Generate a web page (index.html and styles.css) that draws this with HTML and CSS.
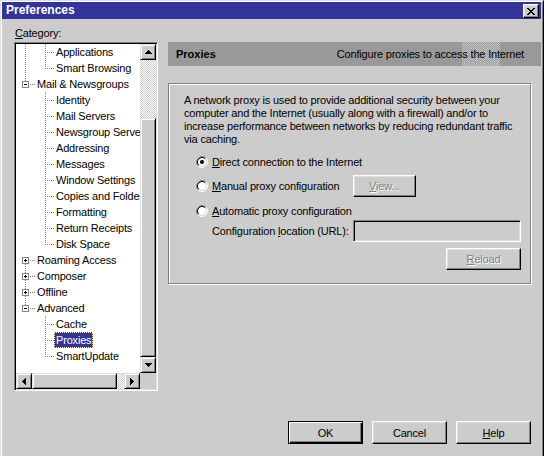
FILE: index.html
```html
<!DOCTYPE html>
<html>
<head>
<meta charset="utf-8">
<title>Preferences</title>
<link rel="stylesheet" href="styles.css">
</head>
<body>
<div class="window">
  <div class="frame">
    <div class="titlebar">
      <span class="title">Preferences</span>
      <button class="close" type="button"><svg width="8" height="7" viewBox="0 0 8 7" shape-rendering="crispEdges"><path d="M0 0h2v1h-2zM6 0h2v1h-2zM1 1h2v1h-2zM5 1h2v1h-2zM2 2h4v1h-4zM3 3h2v1h-2zM2 4h4v1h-4zM1 5h2v1h-2zM5 5h2v1h-2zM0 6h2v1h-2zM6 6h2v1h-2z" fill="#000"/></svg></button>
    </div>
    <div class="main">
      <div class="left">
        <div class="label"><u>C</u>ategory:</div>
        <div class="treebox">
          <div class="list">
            <div class="row lv2 r-a">Applications</div>
            <div class="row lv2 r-sb">Smart Browsing</div>
            <div class="row lv1 r-top"><svg class="exp" width="7" height="7" viewBox="0 0 7 7" shape-rendering="crispEdges"><rect x="0.5" y="0.5" width="6" height="6" fill="#fff" stroke="#808080"/><rect x="2" y="3" width="3" height="1" fill="#000"/></svg><span class="t1">Mail &amp; Newsgroups</span></div>
            <div class="row lv2 r-c">Identity</div>
            <div class="row lv2 r-c">Mail Servers</div>
            <div class="row lv2 r-c">Newsgroup Servers</div>
            <div class="row lv2 r-c">Addressing</div>
            <div class="row lv2 r-c">Messages</div>
            <div class="row lv2 r-c">Window Settings</div>
            <div class="row lv2 r-c">Copies and Folders</div>
            <div class="row lv2 r-c">Formatting</div>
            <div class="row lv2 r-c">Return Receipts</div>
            <div class="row lv2 r-cl">Disk Space</div>
            <div class="row lv1 r-bot"><svg class="exp" width="7" height="7" viewBox="0 0 7 7" shape-rendering="crispEdges"><rect x="0.5" y="0.5" width="6" height="6" fill="#fff" stroke="#808080"/><rect x="2" y="3" width="3" height="1" fill="#000"/><rect x="3" y="2" width="1" height="3" fill="#000"/></svg><span class="t1">Roaming Access</span></div>
            <div class="row lv1 r-mid"><svg class="exp" width="7" height="7" viewBox="0 0 7 7" shape-rendering="crispEdges"><rect x="0.5" y="0.5" width="6" height="6" fill="#fff" stroke="#808080"/><rect x="2" y="3" width="3" height="1" fill="#000"/><rect x="3" y="2" width="1" height="3" fill="#000"/></svg><span class="t1">Composer</span></div>
            <div class="row lv1 r-mid"><svg class="exp" width="7" height="7" viewBox="0 0 7 7" shape-rendering="crispEdges"><rect x="0.5" y="0.5" width="6" height="6" fill="#fff" stroke="#808080"/><rect x="2" y="3" width="3" height="1" fill="#000"/><rect x="3" y="2" width="1" height="3" fill="#000"/></svg><span class="t1">Offline</span></div>
            <div class="row lv1 r-top"><svg class="exp" width="7" height="7" viewBox="0 0 7 7" shape-rendering="crispEdges"><rect x="0.5" y="0.5" width="6" height="6" fill="#fff" stroke="#808080"/><rect x="2" y="3" width="3" height="1" fill="#000"/></svg><span class="t1">Advanced</span></div>
            <div class="row lv2 r-c">Cache</div>
            <div class="row lv2 r-c"><span class="sel">Proxies</span></div>
            <div class="row lv2 r-cl">SmartUpdate</div>
          </div>
          <div class="vscroll">
            <div class="sbtn"><svg width="7" height="4" viewBox="0 0 7 4" shape-rendering="crispEdges"><path d="M3 0h1v1h-1zM2 1h3v1h-3zM1 2h5v1h-5zM0 3h7v1h-7z" fill="#000"/></svg></div>
            <div class="track vtrack"></div>
            <div class="thumb vthumb"></div>
            <div class="sbtn"><svg width="7" height="4" viewBox="0 0 7 4" shape-rendering="crispEdges"><path d="M0 0h7v1h-7zM1 1h5v1h-5zM2 2h3v1h-3zM3 3h1v1h-1z" fill="#000"/></svg></div>
          </div>
          <div class="hscroll">
            <div class="sbtn"><svg width="4" height="7" viewBox="0 0 4 7" shape-rendering="crispEdges"><path d="M3 0h1v7h-1zM2 1h1v5h-1zM1 2h1v3h-1zM0 3h1v1h-1z" fill="#000"/></svg></div>
            <div class="thumb hthumb"></div>
            <div class="track htrack"></div>
            <div class="sbtn"><svg width="4" height="7" viewBox="0 0 4 7" shape-rendering="crispEdges"><path d="M0 0h1v7h-1zM1 1h1v5h-1zM2 2h1v3h-1zM3 3h1v1h-1z" fill="#000"/></svg></div>
          </div>
          <div class="corner"></div>
        </div>
      </div>
      <div class="right">
        <div class="header">
          <span class="htitle">Proxies</span>
          <span class="hdesc">Configure proxies to access the Internet</span>
        </div>
        <div class="group">
          <p class="desc">A network proxy is used to provide additional security between your<br>computer and the Internet (usually along with a firewall) and/or to<br>increase performance between networks by reducing redundant traffic<br>via caching.</p>
          <div class="opts">
            <div class="opt o1">
              <svg class="radio" width="12" height="12" viewBox="0 0 12 12"><circle cx="6" cy="6" r="4" fill="#fff"/><path d="M2.11 9.89A5.5 5.5 0 0 1 9.89 2.11" fill="none" stroke="#808080"/><path d="M9.89 2.11A5.5 5.5 0 0 1 2.11 9.89" fill="none" stroke="#fff"/><path d="M2.82 9.18A4.5 4.5 0 0 1 9.18 2.82" fill="none" stroke="#000"/><path d="M9.18 2.82A4.5 4.5 0 0 1 2.82 9.18" fill="none" stroke="#dfdfdf"/><circle cx="6" cy="6" r="2" fill="#000"/></svg>
              <span><u>D</u>irect connection to the Internet</span>
            </div>
            <div class="opt o2">
              <div class="lab">
                <svg class="radio" width="12" height="12" viewBox="0 0 12 12"><circle cx="6" cy="6" r="4" fill="#fff"/><path d="M2.11 9.89A5.5 5.5 0 0 1 9.89 2.11" fill="none" stroke="#808080"/><path d="M9.89 2.11A5.5 5.5 0 0 1 2.11 9.89" fill="none" stroke="#fff"/><path d="M2.82 9.18A4.5 4.5 0 0 1 9.18 2.82" fill="none" stroke="#000"/><path d="M9.18 2.82A4.5 4.5 0 0 1 2.82 9.18" fill="none" stroke="#dfdfdf"/></svg>
                <span><u>M</u>anual proxy configuration</span>
              </div>
              <button class="btn view dis" type="button"><u>V</u>iew...</button>
            </div>
            <div class="opt o3">
              <svg class="radio" width="12" height="12" viewBox="0 0 12 12"><circle cx="6" cy="6" r="4" fill="#fff"/><path d="M2.11 9.89A5.5 5.5 0 0 1 9.89 2.11" fill="none" stroke="#808080"/><path d="M9.89 2.11A5.5 5.5 0 0 1 2.11 9.89" fill="none" stroke="#fff"/><path d="M2.82 9.18A4.5 4.5 0 0 1 9.18 2.82" fill="none" stroke="#000"/><path d="M9.18 2.82A4.5 4.5 0 0 1 2.82 9.18" fill="none" stroke="#dfdfdf"/></svg>
              <span><u>A</u>utomatic proxy configuration</span>
            </div>
            <div class="opt o4">
              <div class="lab sub"><span>Configuration <u>l</u>ocation (URL):</span></div>
              <div class="field"></div>
            </div>
            <div class="opt o5">
              <button class="btn reload dis" type="button"><u>R</u>eload</button>
            </div>
          </div>
        </div>
      </div>
    </div>
    <div class="buttons">
      <button class="btn big default" type="button">OK</button>
      <button class="btn big" type="button">Cancel</button>
      <button class="btn big" type="button"><u>H</u>elp</button>
    </div>
  </div>
</div>
</body>
</html>
```
FILE: styles.css
```css
* { box-sizing: border-box; }
html, body { margin: 0; padding: 0; }
body {
  width: 544px;
  height: 456px;
  overflow: hidden;
  background: #cccccc;
  font-family: "Liberation Sans", Arial, sans-serif;
  font-size: 11px;
  letter-spacing: -0.18px;
  color: #000;
}
button { font-family: inherit; font-size: 11px; letter-spacing: inherit; color: #000; }

.window {
  width: 544px;
  height: 456px;
  border-top: 1px solid #dfdfdf;
  border-left: 1px solid #dfdfdf;
  border-right: 1px solid #000;
  background: #cccccc;
}
.frame {
  height: 100%;
  border-top: 1px solid #fff;
  border-left: 1px solid #fff;
  border-right: 1px solid #808080;
  padding-right: 1px;
  display: flex;
  flex-direction: column;
}

/* title bar */
.titlebar {
  flex: none;
  height: 17px;
  background: #333399;
  display: flex;
  align-items: flex-start;
  padding-left: 4px;
}
.title {
  color: #fff;
  font-weight: bold;
  font-size: 12px;
  letter-spacing: 0;
  line-height: 17px;
}
.close {
  margin: 2px 2px 0 auto;
  width: 16px;
  height: 14px;
  padding: 0;
  background: #cccccc;
  border: 1px solid;
  border-color: #fff #000 #000 #fff;
  box-shadow: inset -1px -1px #808080, inset 1px 1px #dfdfdf;
  display: flex;
  align-items: center;
  justify-content: center;
}

/* main */
.main {
  flex: none;
  display: flex;
  margin-top: 8px;
  padding-left: 12px;
}
.left { flex: none; width: 144px; }
.label { height: 13px; line-height: 13px; margin-bottom: 2px; padding-left: 1px; }

.treebox {
  width: 144px;
  height: 349px;
  border: 1px solid;
  border-color: #808080 #fff #fff #808080;
  padding: 1px;
  box-shadow: inset 1px 1px #000, inset -1px -1px #dfdfdf;
  display: grid;
  grid-template-columns: 124px 16px;
  grid-template-rows: 329px 16px;
}
.list {
  background: #fff;
  overflow: hidden;
}
.row {
  height: 16px;
  line-height: 16px;
  white-space: nowrap;
  background-repeat: no-repeat;
}
.lv2 { padding-left: 40px; }
.lv1 { display: flex; align-items: flex-start; }
.exp { flex: none; margin: 5px 0 0 6px; display: block; }
.t1 { margin-left: 8px; }

/* dotted tree connectors */
.r-c {
  background-image:
    repeating-linear-gradient(to right, #808080 0 1px, transparent 1px 2px),
    repeating-linear-gradient(to bottom, #808080 0 1px, transparent 1px 2px);
  background-position: 31px 8px, 29px 0;
  background-size: 8px 1px, 1px 16px;
}
.r-cl {
  background-image:
    repeating-linear-gradient(to right, #808080 0 1px, transparent 1px 2px),
    repeating-linear-gradient(to bottom, #808080 0 1px, transparent 1px 2px);
  background-position: 31px 8px, 29px 0;
  background-size: 8px 1px, 1px 9px;
}
.r-a {
  background-image:
    repeating-linear-gradient(to right, #808080 0 1px, transparent 1px 2px),
    repeating-linear-gradient(to bottom, #808080 0 1px, transparent 1px 2px),
    repeating-linear-gradient(to bottom, #808080 0 1px, transparent 1px 2px);
  background-position: 31px 8px, 29px 0, 9px 0;
  background-size: 8px 1px, 1px 16px, 1px 16px;
}
.r-sb {
  background-image:
    repeating-linear-gradient(to right, #808080 0 1px, transparent 1px 2px),
    repeating-linear-gradient(to bottom, #808080 0 1px, transparent 1px 2px),
    repeating-linear-gradient(to bottom, #808080 0 1px, transparent 1px 2px);
  background-position: 31px 8px, 29px 0, 9px 0;
  background-size: 8px 1px, 1px 9px, 1px 16px;
}
.r-top {
  background-image:
    repeating-linear-gradient(to right, #808080 0 1px, transparent 1px 2px),
    repeating-linear-gradient(to bottom, #808080 0 1px, transparent 1px 2px);
  background-position: 14px 8px, 9px 0;
  background-size: 6px 1px, 1px 5px;
}
.r-bot {
  background-image:
    repeating-linear-gradient(to right, #808080 0 1px, transparent 1px 2px),
    repeating-linear-gradient(to bottom, #808080 0 1px, transparent 1px 2px);
  background-position: 14px 8px, 9px 12px;
  background-size: 6px 1px, 1px 4px;
}
.r-mid {
  background-image:
    repeating-linear-gradient(to right, #808080 0 1px, transparent 1px 2px),
    repeating-linear-gradient(to bottom, #808080 0 1px, transparent 1px 2px),
    repeating-linear-gradient(to bottom, #808080 0 1px, transparent 1px 2px);
  background-position: 14px 8px, 9px 0, 9px 12px;
  background-size: 6px 1px, 1px 5px, 1px 4px;
}
.sel {
  display: inline-block;
  height: 16px;
  line-height: 14px;
  margin-left: -2px;
  padding: 0 1px;
  border: 1px dotted #ffff99;
  background: #333399;
  color: #fff;
}

/* scrollbars */
.vscroll { display: flex; flex-direction: column; }
.hscroll { display: flex; }
.sbtn, .thumb {
  flex: none;
  background: #cccccc;
  border: 1px solid;
  border-color: #dfdfdf #000 #000 #dfdfdf;
  box-shadow: inset 1px 1px #fff, inset -1px -1px #808080;
}
.sbtn {
  width: 16px;
  height: 16px;
  display: flex;
  align-items: center;
  justify-content: center;
}
.sbtn svg { display: block; }
.track {
  flex: none;
  background: repeating-conic-gradient(#fff 0 25%, #cccccc 0 50%) 0 0 / 2px 2px;
}
.vtrack { height: 58px; width: 16px; }
.vthumb { height: 239px; width: 16px; }
.hthumb { width: 85px; height: 16px; }
.htrack { width: 7px; height: 16px; }
.corner { background: #cccccc; }

/* right panel */
.right {
  flex: 1;
  margin-left: 10px;
  padding-top: 15px;
}
.header {
  height: 24px;
  display: flex;
  align-items: center;
  justify-content: space-between;
  padding: 0 17px 0 8px;
  background:
    linear-gradient(to right, #999 0 294px, transparent 294px 332px, #999 332px),
    repeating-conic-gradient(#c4c4c4 0 25%, #999 0 50%) 0 0 / 2px 2px;
}
.htitle { font-weight: bold; letter-spacing: 0; }

.group {
  margin: 17px 10px 0 0;
  height: 201px;
  border: 1px solid #808080;
  box-shadow: inset 1px 1px #fff, 1px 1px #fff;
  padding: 10px 0 0 15px;
}
.desc {
  margin: 0;
  line-height: 13px;
  white-space: nowrap;
}
.opts {
  margin-left: 12px;
  width: 325px;
}
.opt {
  display: flex;
  align-items: center;
  white-space: nowrap;
}
.radio { flex: none; display: block; margin-right: 4px; }
.lab { width: 157px; display: flex; align-items: center; }
.sub { padding-left: 16px; }
.o1 { height: 18px; margin-top: 7px; }
.o2 { height: 22px; margin-top: 4px; }
.o3 { height: 18px; margin-top: 5px; }
.o4 { height: 22px; }
.o5 { height: 22px; margin-top: 6px; justify-content: flex-end; }

.field {
  width: 168px;
  height: 22px;
  border: 1px solid;
  border-color: #808080 #fff #fff #808080;
  box-shadow: inset 1px 1px #000, inset -1px -1px #dfdfdf;
  background: #cccccc;
}

.btn {
  padding: 0;
  background: #cccccc;
  border: 1px solid;
  border-color: #fff #000 #000 #fff;
  box-shadow: inset -1px -1px #808080, inset 1px 1px #dfdfdf;
  text-align: center;
  line-height: 14px;
}
.dis { color: #808080; text-shadow: 1px 1px #fff; }
.view { width: 63px; height: 22px; }
.reload { width: 75px; height: 22px; }

.buttons {
  flex: none;
  margin-top: 30px;
  padding-right: 10px;
  display: flex;
  justify-content: flex-end;
  gap: 9px;
}
.big { width: 75px; height: 23px; }
.default {
  border: 1px solid #000;
  box-shadow: inset 1px 1px #fff, inset -1px -1px #000, inset -2px -2px #808080;
}
```
